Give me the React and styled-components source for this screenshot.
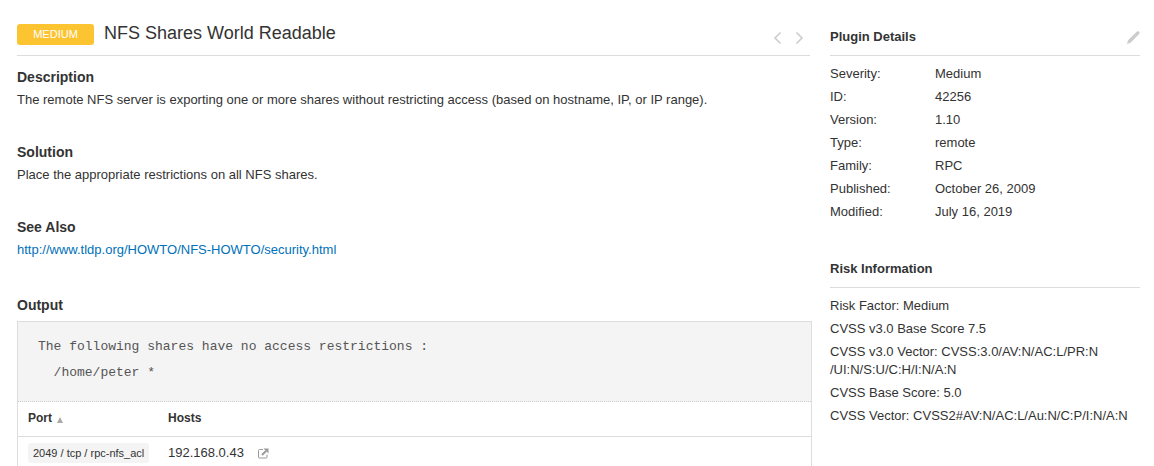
import React from "react";
import styled, { createGlobalStyle } from "styled-components";

const GlobalStyle = createGlobalStyle`
  *, *::before, *::after { box-sizing: border-box; }
  body {
    margin: 0;
    background: #fff;
    color: #333;
    font: 13px/18px "Liberation Sans", Arial, sans-serif;
  }
  h1, h2, p, pre, dl, dd, ul { margin: 0; padding: 0; }
`;

const Page = styled.div`
  display: flex;
  gap: 20px;
  padding: 17px 14px 0 17px;
`;

const Main = styled.main`
  flex: 1;
  min-width: 0;
`;

const Sidebar = styled.aside`
  flex: 0 0 310px;
`;

const Header = styled.header`
  display: flex;
  align-items: center;
  height: 39px;
  border-bottom: 1px solid #ddd;
`;

const Severity = styled.span`
  width: 77px;
  margin: 0 10px 4px 0;
  border-radius: 3px;
  background: #fdc431;
  color: #fff;
  font-size: 11px;
  line-height: 21px;
  text-align: center;
`;

const Title = styled.h1`
  flex: 1;
  padding-bottom: 6px;
  font-size: 18px;
  line-height: 22px;
  font-weight: 400;
`;

const IconButton = styled.button`
  display: flex;
  padding: 0;
  border: 0;
  background: none;
  color: ${(p) => p.$color || "#ccc"};
  cursor: pointer;
`;

const Pager = styled.nav`
  display: flex;
  gap: 8px;
  padding: 3px 4px 0 0;
`;

const Section = styled.section`
  padding: 12px 0 22px;
`;

const Heading = styled.h2`
  margin-bottom: 5px;
  font-size: 14px;
  line-height: 18px;
`;

const Link = styled.a`
  color: #0071b9;
  text-decoration: none;
`;

const OutputSection = styled.section`
  padding-top: 15px;
`;

const OutputBox = styled.div`
  box-sizing: content-box;
  width: 100%;
  margin-top: 7px;
  border: 1px solid #ddd;
`;

const OutputText = styled.pre`
  padding: 12px 20px 15px;
  border-bottom: 1px dotted #ccc;
  background: #f4f4f4;
  color: #555;
  font: 13px/26px "Liberation Mono", "Courier New", monospace;
`;

const PortTable = styled.table`
  width: 100%;
  border-collapse: separate;
  border-spacing: 0;
  table-layout: fixed;
`;

const HeadCell = styled.th`
  width: ${(p) => p.$width || "auto"};
  height: 35px;
  padding: 0 10px 2px;
  border-bottom: 1px solid #ddd;
  font-size: 12px;
  text-align: left;
`;

const SortArrow = styled.svg`
  margin-left: 5px;
  vertical-align: -1px;
  fill: #aaa;
`;

const Cell = styled.td`
  height: 32px;
  padding: 0 10px;
  white-space: nowrap;
`;

const PortChip = styled.span`
  display: inline-block;
  padding: 0 5px;
  border-radius: 3px;
  background: #f4f4f4;
  font-size: 11px;
  line-height: 20px;
`;

const Host = styled.div`
  display: flex;
  align-items: center;
  gap: 14px;
`;

const SideHeader = styled(Header)`
  justify-content: space-between;
  padding-top: 2px;
`;

const SideHeading = styled.h2`
  font-size: 13px;
  line-height: 18px;
`;

const SideSection = styled.section`
  margin-bottom: 28px;
`;

const Details = styled.dl`
  display: grid;
  grid-template-columns: 105px 1fr;
  row-gap: 5px;
  padding-top: 9px;
`;

const RiskList = styled.ul`
  display: grid;
  row-gap: 5px;
  padding-top: 9px;
  list-style: none;
`;

const Chevron = ({ d }) => (
  <svg width="14" height="14" viewBox="0 0 14 14" fill="none" stroke="currentColor" strokeWidth="1.6">
    <path d={d} />
  </svg>
);

const Pencil = () => (
  <svg width="14" height="14" viewBox="0 0 14 14" fill="currentColor">
    <path d="M1 14l1-3.800L11 1.500q.9-.8 1.700 0l.6.600q.8.900 0 1.700L4.600 12.700z" />
  </svg>
);

const External = () => (
  <svg width="11" height="11" viewBox="0 0 11 11" fill="none" stroke="currentColor">
    <path d="M5 1.500H1.500q-1 0-1 1v6.500q0 1 1 1H8q1 0 1-1V6.500" />
    <path d="M4 7L8 3" strokeWidth="2" />
    <path d="M5.500 .5H10.500v5z" fill="currentColor" stroke="none" />
  </svg>
);

const details = [
  ["Severity:", "Medium"],
  ["ID:", "42256"],
  ["Version:", "1.10"],
  ["Type:", "remote"],
  ["Family:", "RPC"],
  ["Published:", "October 26, 2009"],
  ["Modified:", "July 16, 2019"],
];

export default function App() {
  return (
    <>
      <GlobalStyle />
      <Page>
        <Main>
          <Header>
            <Severity>MEDIUM</Severity>
            <Title>NFS Shares World Readable</Title>
            <Pager aria-label="Plugins">
              <IconButton type="button" aria-label="Previous">
                <Chevron d="M10.500 1.500L5 7l5.500 5.500" />
              </IconButton>
              <IconButton type="button" aria-label="Next">
                <Chevron d="M4.500 1.500L10 7l-5.500 5.500" />
              </IconButton>
            </Pager>
          </Header>
          <Section>
            <Heading>Description</Heading>
            <p>
              The remote NFS server is exporting one or more shares without restricting access (based on
              hostname, IP, or IP range).
            </p>
          </Section>
          <Section>
            <Heading>Solution</Heading>
            <p>Place the appropriate restrictions on all NFS shares.</p>
          </Section>
          <Section>
            <Heading>See Also</Heading>
            <p>
              <Link href="http://www.tldp.org/HOWTO/NFS-HOWTO/security.html">
                http://www.tldp.org/HOWTO/NFS-HOWTO/security.html
              </Link>
            </p>
          </Section>
          <OutputSection>
            <Heading>Output</Heading>
            <OutputBox>
              <OutputText>{"The following shares have no access restrictions :\n  /home/peter *"}</OutputText>
              <PortTable>
                <thead>
                  <tr>
                    <HeadCell $width="140px">
                      Port
                      <SortArrow width="6" height="6" viewBox="0 0 7 7">
                        <path d="M3.500 0L7 7H0z" />
                      </SortArrow>
                    </HeadCell>
                    <HeadCell>Hosts</HeadCell>
                  </tr>
                </thead>
                <tbody>
                  <tr>
                    <Cell>
                      <PortChip>2049 / tcp / rpc-nfs_acl</PortChip>
                    </Cell>
                    <Cell>
                      <Host>
                        192.168.0.43
                        <IconButton type="button" $color="#999" aria-label="Open host">
                          <External />
                        </IconButton>
                      </Host>
                    </Cell>
                  </tr>
                </tbody>
              </PortTable>
            </OutputBox>
          </OutputSection>
        </Main>
        <Sidebar>
          <SideSection>
            <SideHeader>
              <SideHeading>Plugin Details</SideHeading>
              <IconButton type="button" aria-label="Edit">
                <Pencil />
              </IconButton>
            </SideHeader>
            <Details>
              {details.map(([name, value]) => (
                <React.Fragment key={name}>
                  <dt>{name}</dt>
                  <dd>{value}</dd>
                </React.Fragment>
              ))}
            </Details>
          </SideSection>
          <SideSection>
            <SideHeader>
              <SideHeading>Risk Information</SideHeading>
            </SideHeader>
            <RiskList>
              <li>Risk Factor: Medium</li>
              <li>CVSS v3.0 Base Score 7.5</li>
              <li>
                CVSS v3.0 Vector: CVSS:3.0/AV:N/AC:L/PR:N
                <wbr />
                /UI:N/S:U/C:H/I:N/A:N
              </li>
              <li>CVSS Base Score: 5.0</li>
              <li>CVSS Vector: CVSS2#AV:N/AC:L/Au:N/C:P/I:N/A:N</li>
            </RiskList>
          </SideSection>
        </Sidebar>
      </Page>
    </>
  );
}
